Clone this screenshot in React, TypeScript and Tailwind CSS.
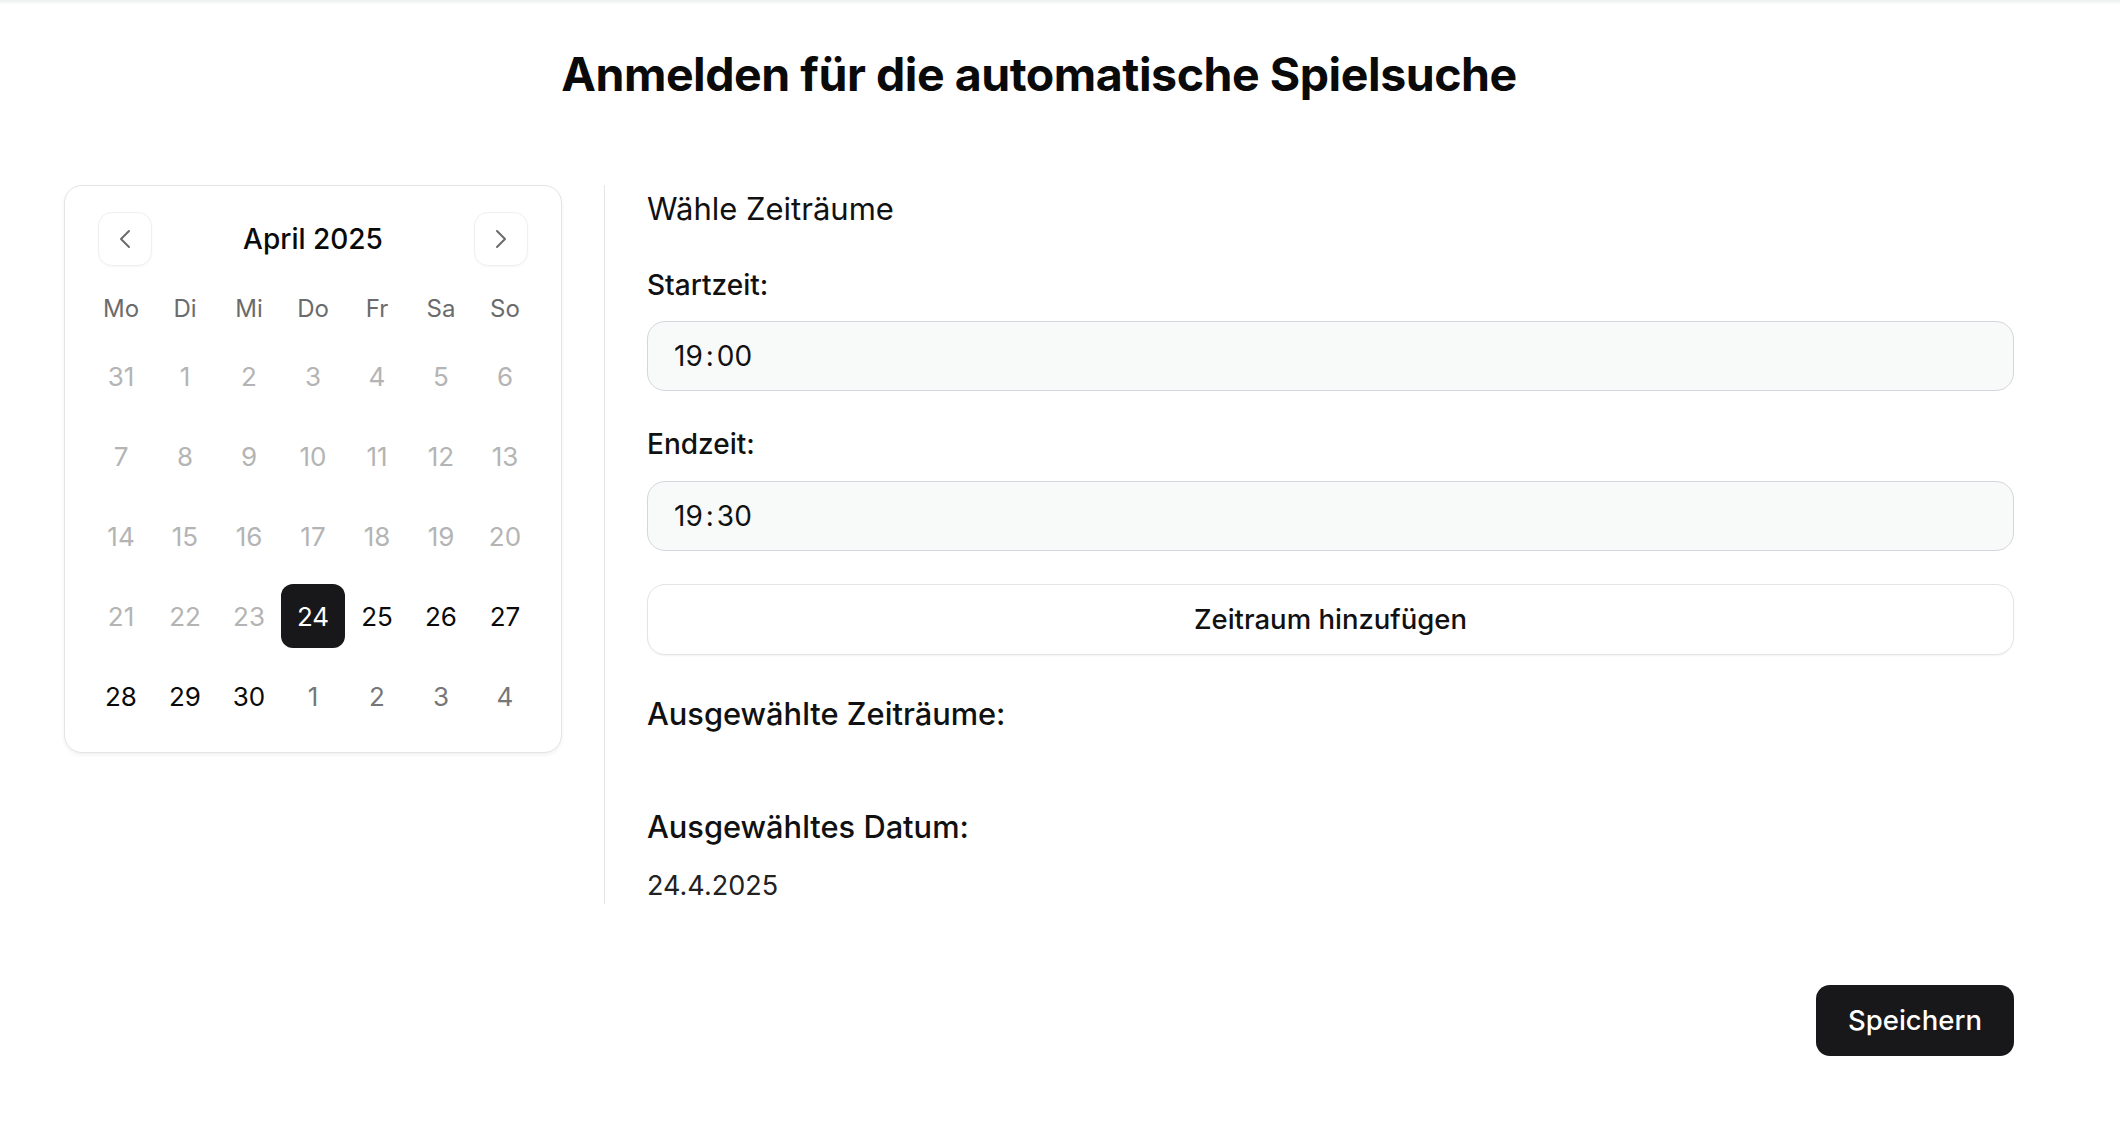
import React from "react";
import { ChevronLeft, ChevronRight } from "lucide-react";

type Day = { n: number; kind: "past" | "cur" | "next" | "sel" };

const days: Day[] = [
  { n: 31, kind: "past" },
  ...[1, 2, 3, 4, 5, 6, 7, 8, 9, 10, 11, 12, 13, 14, 15, 16, 17, 18, 19, 20, 21, 22, 23].map(
    (n) => ({ n, kind: "past" as const })
  ),
  { n: 24, kind: "sel" },
  ...[25, 26, 27, 28, 29, 30].map((n) => ({ n, kind: "cur" as const })),
  ...[1, 2, 3, 4].map((n) => ({ n, kind: "next" as const })),
];

const weekdays = ["Mo", "Di", "Mi", "Do", "Fr", "Sa", "So"];

function dayClass(kind: Day["kind"]) {
  if (kind === "past") return "text-[#b4b4b4]";
  if (kind === "next") return "text-[#777777]";
  if (kind === "sel") return "bg-[#18181b] text-white rounded-[12px]";
  return "text-[#0a0a0a]";
}

function Calendar() {
  return (
    <div className="w-[498px] shrink-0 self-start rounded-[18px] border border-[#e4e4e4] bg-white p-[24px] pt-[26px] shadow-[0_2px_4px_rgba(0,0,0,0.06)]">
      <div className="flex h-[54px] items-center justify-between px-[9px]">
        <button className="flex h-[54px] w-[54px] items-center justify-center rounded-[14px] border border-[#efefef] shadow-[0_1px_2px_rgba(0,0,0,0.04)]">
          <ChevronLeft size={32} strokeWidth={1.5} color="#6b6b6b" />
        </button>
        <div className="text-[28px] font-medium text-[#0a0a0a]">April 2025</div>
        <button className="flex h-[54px] w-[54px] items-center justify-center rounded-[14px] border border-[#efefef] shadow-[0_1px_2px_rgba(0,0,0,0.04)]">
          <ChevronRight size={32} strokeWidth={1.5} color="#6b6b6b" />
        </button>
      </div>
      <div className="mt-[21px] grid h-[44px] grid-cols-7 items-center">
        {weekdays.map((w) => (
          <div key={w} className="text-center text-[24px] text-[#6b6b6b]">
            {w}
          </div>
        ))}
      </div>
      <div className="mt-[13px] grid grid-cols-7 gap-y-[16px]">
        {days.map((d, i) => (
          <div
            key={i}
            className={`flex h-[64px] w-[64px] items-center justify-center text-[26px] ${dayClass(d.kind)}`}
          >
            {d.n}
          </div>
        ))}
      </div>
    </div>
  );
}

function TimeField({ h, m }: { h: string; m: string }) {
  return (
    <div className="flex h-[70px] w-full items-center rounded-[18px] border border-[#d4d6dc] bg-[#f8f9f9] pl-[26px] text-[28px] text-[#111111]">
      <span>{h}</span>
      <span className="mx-[3px]">:</span>
      <span>{m}</span>
    </div>
  );
}

export default function App() {
  return (
    <div
      className="min-h-[1140px] w-[2120px] bg-white text-[#111111]"
      style={{ fontFamily: "Inter, 'Noto Sans', sans-serif" }}
    >
      <div className="h-[5px] bg-gradient-to-b from-[#eef0f0] to-white" />
      <div className="ml-[64px] w-[1950px]">
        <h1 className="mt-[39px] text-center text-[46.5px] font-bold leading-[60px] tracking-[-0.01em] text-[#0a0a0a]">
          Anmelden für die automatische Spielsuche
        </h1>
        <div className="mt-[81px] flex gap-[42px]">
          <Calendar />
          <div className="flex flex-1 flex-col border-l border-[#e5e5e5] pl-[42px]">
            <h2 className="mt-[7px] text-[31px] leading-[34px] text-[#111111]">Wähle Zeiträume</h2>
            <label className="mt-[43px] text-[28px] font-medium leading-[32px] text-[#111111]">Startzeit:</label>
            <div className="mt-[20px]">
              <TimeField h="19" m="00" />
            </div>
            <label className="mt-[37px] text-[28px] font-medium leading-[32px] text-[#111111]">Endzeit:</label>
            <div className="mt-[21px]">
              <TimeField h="19" m="30" />
            </div>
            <button className="mt-[33px] h-[71px] w-full rounded-[18px] border border-[#e4e4e4] bg-white text-[27.5px] font-medium text-[#111111] shadow-[0_1px_2px_rgba(0,0,0,0.05)]">
              Zeitraum hinzufügen
            </button>
            <h3 className="mt-[41px] text-[30.8px] font-medium leading-[36px] text-[#111111]">Ausgewählte Zeiträume:</h3>
            <h3 className="mt-[77px] text-[30.8px] font-medium leading-[36px] text-[#111111]">Ausgewähltes Datum:</h3>
            <p className="mt-[25px] mb-[2px] text-[27px] leading-[32px] text-[#222222]">24.4.2025</p>
          </div>
        </div>
        <div className="mt-[81px] flex justify-end">
          <button className="h-[71px] w-[198px] rounded-[14px] bg-[#18181b] text-[27.5px] font-medium text-white">
            Speichern
          </button>
        </div>
      </div>
    </div>
  );
}
